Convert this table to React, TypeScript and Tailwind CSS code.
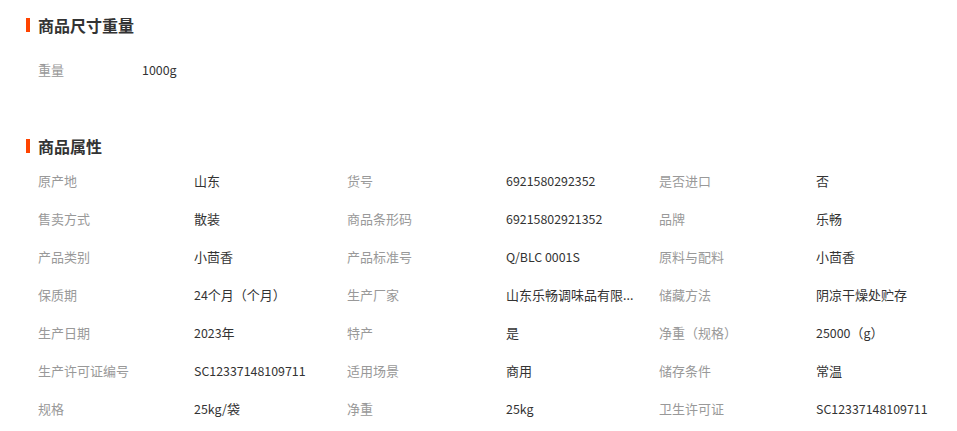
import React from "react";

const rows: string[][] = [
  ["原产地", "山东", "货号", "6921580292352", "是否进口", "否"],
  ["售卖方式", "散装", "商品条形码", "69215802921352", "品牌", "乐畅"],
  ["产品类别", "小茴香", "产品标准号", "Q/BLC 0001S", "原料与配料", "小茴香"],
  ["保质期", "24个月（个月）", "生产厂家", "山东乐畅调味品有限...", "储藏方法", "阴凉干燥处贮存"],
  ["生产日期", "2023年", "特产", "是", "净重（规格）", "25000（g）"],
  ["生产许可证编号", "SC12337148109711", "适用场景", "商用", "储存条件", "常温"],
  ["规格", "25kg/袋", "净重", "25kg", "卫生许可证", "SC12337148109711"],
];

const colW = ["w-[156px]", "w-[153px]", "w-[159px]", "w-[153px]", "w-[157px]", "flex-1"];

function Mixed({ text }: { text: string }) {
  const parts = text.match(/[\x20-\x7e]+|[^\x20-\x7e]+/g) || [];
  return (
    <>
      {parts.map((p, i) =>
        /^[\x20-\x7e]+$/.test(p) ? (
          <span key={i} className="text-[12.4px]">
            {p}
          </span>
        ) : (
          <span key={i}>{p}</span>
        )
      )}
    </>
  );
}

function Title({ text }: { text: string }) {
  return (
    <div className="flex items-center h-[20px]">
      <div className="w-[4px] h-[14px] bg-[#ff4400]" />
      <div className="ml-[8px] text-[16px] font-bold text-[#333] leading-[20px]">{text}</div>
    </div>
  );
}

export default function App() {
  return (
    <div
      className="w-[957px] h-[431px] bg-white overflow-hidden pl-[26px] pt-[15px] text-[13px]"
      style={{ fontFamily: '"Noto Sans CJK SC", "Liberation Sans", sans-serif' }}
    >
      <Title text="商品尺寸重量" />
      <div className="mt-[16px] flex items-center h-[38px] pl-[12px]">
        <div className="w-[104px] text-[#999]">重量</div>
        <div className="text-[#333]">
          <Mixed text="1000g" />
        </div>
      </div>
      <div className="mt-[47px]">
        <Title text="商品属性" />
      </div>
      <div className="mt-[6px] pl-[12px]">
        {rows.map((r, i) => (
          <div key={i} className="flex items-center h-[38px]">
            {r.map((c, j) => (
              <div
                key={j}
                className={`${colW[j]} shrink-0 whitespace-nowrap ${j % 2 === 0 ? "text-[#999]" : "text-[#333]"}`}
              >
                <Mixed text={c} />
              </div>
            ))}
          </div>
        ))}
      </div>
    </div>
  );
}
